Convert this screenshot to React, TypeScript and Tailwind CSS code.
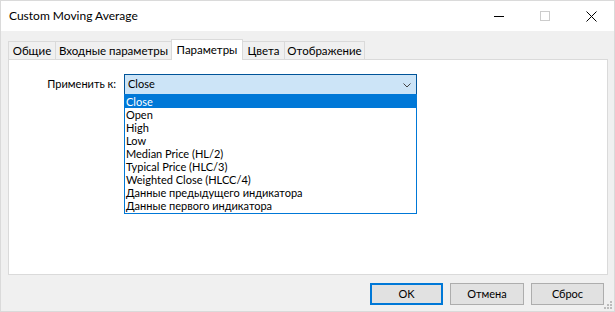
const tabs = [
  { label: 'Общие', w: 'w-[48px]' },
  { label: 'Входные параметры', w: 'w-[117px]' },
  { label: 'Параметры', w: 'w-[72px]', active: true },
  { label: 'Цвета', w: 'w-[43px]' },
  { label: 'Отображение', w: 'w-[81px]' },
];

const options = [
  'Close',
  'Open',
  'High',
  'Low',
  'Median Price (HL/2)',
  'Typical Price (HLC/3)',
  'Weighted Close (HLCC/4)',
  'Данные предыдущего индикатора',
  'Данные первого индикатора',
];

const App = () => {
  return (
    <div
      className="w-[615px] h-[312px] border border-[#dadada] bg-[#f0f0f0] flex flex-col text-[11px] text-black overflow-hidden"
      style={{ fontFamily: '"Segoe UI", Lato, "Noto Sans", sans-serif' }}
    >
      {/* Title bar */}
      <div className="h-[30px] bg-white flex items-center shrink-0">
        <div className="pl-[8px] leading-none text-[12px]">Custom Moving Average</div>
        <div className="ml-auto flex items-center h-full">
          {/* minimize */}
          <div className="w-[46px] h-full flex items-center justify-center">
            <div className="w-[10px] h-px bg-black" />
          </div>
          {/* maximize (disabled) */}
          <div className="w-[46px] h-full flex items-center justify-center">
            <div className="w-[10px] h-[10px] border border-[#cccccc]" />
          </div>
          {/* close */}
          <div className="w-[46px] h-full flex items-center justify-center">
            <svg width="11" height="11" viewBox="0 0 11 11">
              <path d="M0.5 0.5 L10.5 10.5 M10.5 0.5 L0.5 10.5" stroke="#000" strokeWidth="1" />
            </svg>
          </div>
        </div>
      </div>

      {/* Tabs */}
      <div className="mt-[8px] pl-[7px] h-[20px] flex items-end shrink-0 text-[11.5px]">
        {tabs.map((t, i) =>
          t.active ? (
            <div
              key={t.label}
              className={`${t.w} h-[21px] -mb-px -ml-px relative z-10 bg-white border border-b-0 border-[#dadada] flex items-start justify-center pt-[1px] whitespace-nowrap`}
            >
              {t.label}
            </div>
          ) : (
            <div
              key={t.label}
              className={`${t.w} h-[18px] ${i > 0 ? '-ml-px' : ''} bg-[#f0f0f0] border border-b-0 border-[#dadada] flex items-center justify-center whitespace-nowrap`}
            >
              {t.label}
            </div>
          )
        )}
      </div>

      {/* Panel */}
      <div className="ml-[7px] w-[600px] h-[216px] bg-white border border-[#dadada] relative shrink-0">
        <div className="mt-[14px] flex items-center">
          <div className="w-[115px] text-right pr-[8px]">Применить к:</div>
          <div className="w-[293px] h-[21px] bg-[#cce4f7] border border-[#005499] flex items-center pl-[3px] relative">
            <span>Close</span>
            <svg className="absolute right-[5px] top-[8px]" width="8" height="5" viewBox="0 0 8 5">
              <path d="M0.5 0.5 L4 4 L7.5 0.5" stroke="#444" strokeWidth="1" fill="none" />
            </svg>
          </div>
        </div>

        {/* Dropdown list */}
        <div className="absolute left-[115px] top-[34px] w-[293px] h-[120px] bg-white border border-[#0078d7] z-20">
          {options.map((o, i) => (
            <div
              key={o}
              className={`h-[13px] leading-[13px] pl-[1px] whitespace-nowrap ${i === 0 ? 'bg-[#0078d7] text-white' : ''}`}
            >
              {o}
            </div>
          ))}
        </div>
      </div>

      {/* Buttons */}
      <div className="flex-1 flex items-start pt-[8px] pl-[369px] gap-[7px] relative">
        <button className="w-[73px] h-[22px] bg-[#e1e1e1] border-2 border-[#0078d7] flex items-center justify-center">
          OK
        </button>
        <button className="w-[74px] h-[22px] bg-[#e1e1e1] border border-[#adadad] flex items-center justify-center">
          Отмена
        </button>
        <button className="w-[73px] h-[22px] bg-[#e1e1e1] border border-[#adadad] flex items-center justify-center">
          Сброс
        </button>
        {/* resize grip */}
        <svg className="absolute right-[1px] bottom-[1px]" width="9" height="9" viewBox="0 0 9 9">
          <rect x="6" y="0" width="2" height="2" fill="#bcbcbc" />
          <rect x="3" y="3" width="2" height="2" fill="#bcbcbc" />
          <rect x="6" y="3" width="2" height="2" fill="#bcbcbc" />
          <rect x="0" y="6" width="2" height="2" fill="#bcbcbc" />
          <rect x="3" y="6" width="2" height="2" fill="#bcbcbc" />
          <rect x="6" y="6" width="2" height="2" fill="#bcbcbc" />
        </svg>
      </div>
    </div>
  );
};

export default App;
